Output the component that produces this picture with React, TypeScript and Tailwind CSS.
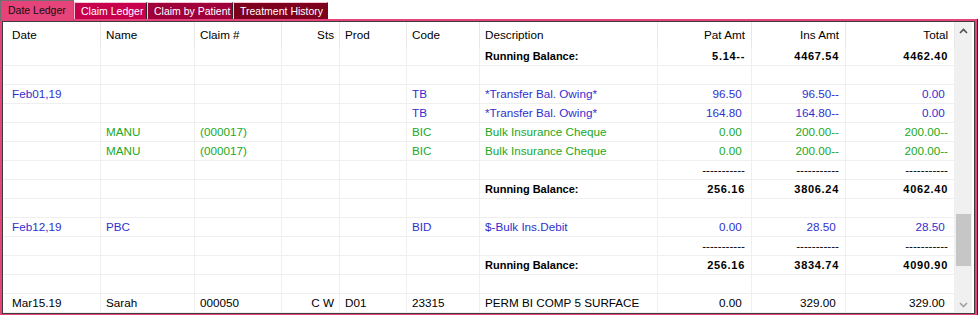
import React from 'react';

type Row = {
  cells: string[];
  tone?: 'blue' | 'green' | 'black';
  bold?: boolean;
};

const cols = 'grid grid-cols-[98px_94px_87px_58px_67px_73px_178px_94px_94px_109px]';
const rightCols = [3, 7, 8, 9];

const empty = ['', '', '', '', '', '', '', '', '', ''];
const dashes = ['', '', '', '', '', '', '', '-----------', '-----------', '-----------'];

const rows: Row[] = [
  { cells: ['', '', '', '', '', '', 'Running Balance:', '5.14--', '4467.54', '4462.40'], bold: true },
  { cells: empty },
  { cells: ['Feb01,19', '', '', '', '', 'TB', '*Transfer Bal. Owing*', '96.50 ', '96.50--', '0.00 '], tone: 'blue' },
  { cells: ['', '', '', '', '', 'TB', '*Transfer Bal. Owing*', '164.80 ', '164.80--', '0.00 '], tone: 'blue' },
  { cells: ['', 'MANU', '(000017)', '', '', 'BIC', 'Bulk Insurance Cheque', '0.00 ', '200.00--', '200.00--'], tone: 'green' },
  { cells: ['', 'MANU', '(000017)', '', '', 'BIC', 'Bulk Insurance Cheque', '0.00 ', '200.00--', '200.00--'], tone: 'green' },
  { cells: dashes },
  { cells: ['', '', '', '', '', '', 'Running Balance:', '256.16', '3806.24', '4062.40'], bold: true },
  { cells: empty },
  { cells: ['Feb12,19', 'PBC', '', '', '', 'BID', '$-Bulk Ins.Debit', '0.00 ', '28.50 ', '28.50 '], tone: 'blue' },
  { cells: dashes },
  { cells: ['', '', '', '', '', '', 'Running Balance:', '256.16', '3834.74', '4090.90'], bold: true },
  { cells: empty },
  { cells: ['Mar15.19', 'Sarah', '000050', 'C W', 'D01', '23315', 'PERM BI COMP 5 SURFACE', '0.00 ', '329.00 ', '329.00 '], tone: 'black' },
];

const headers = ['Date', 'Name', 'Claim #', 'Sts', 'Prod', 'Code', 'Description', 'Pat Amt', 'Ins Amt', 'Total'];

function toneClass(tone?: Row['tone']) {
  if (tone === 'blue') return 'text-[#2f2fd0]';
  if (tone === 'green') return 'text-[#22a822]';
  return 'text-black';
}

function cellPad(i: number) {
  if (i === 0) return 'pl-[9px]';
  if (rightCols.includes(i)) return 'justify-end pr-[5px]';
  return 'pl-[5px]';
}

const tabs = [
  { label: 'Claim Ledger', cls: 'w-[73px] bg-[#c6004c]' },
  { label: 'Claim by Patient', cls: 'w-[86px] bg-[#a0003a]' },
  { label: 'Treatment History', cls: 'w-[95px] bg-[#7d001c]' },
];

export default function App() {
  return (
    <div className="w-[978px] h-[315px] bg-white overflow-hidden font-['Liberation_Sans',Arial,sans-serif] flex flex-col">
      {/* tab strip */}
      <div className="flex items-end h-[19px] relative z-10">
        <div className="w-[74px] h-[21px] -mb-[2px] bg-[#e5437a] border border-b-0 border-[#707070] text-[#111] text-[10.5px] pl-[7px] flex items-center">
          Date Ledger
        </div>
        {tabs.map((t) => (
          <div
            key={t.label}
            className={`${t.cls} h-[17px] border-t border-l border-t-[#f4c6d4] border-l-[#f4c6d4] border-r border-r-[#2a2a2a] text-white text-[10.5px] pl-[6px] pt-[1px] flex items-center`}
          >
            {t.label}
          </div>
        ))}
      </div>

      {/* panel */}
      <div className="flex-1 border-r border-b border-[#2a2a2a]">
        <div className="h-full border-2 border-[#e5437a]">
          <div className="h-full border border-[#3c3c3c] flex text-[11.7px] bg-white">
            <div className="w-[952px] flex flex-col overflow-hidden">
              <div className={`${cols} h-[25px] shrink-0`}>
                {headers.map((h, i) => (
                  <div key={h} className={`flex items-center border-r border-[#e6e6e6] ${cellPad(i)} ${i >= 7 ? 'pr-[6px]' : ''}`}>
                    {h}
                  </div>
                ))}
              </div>
              {rows.map((r, ri) => (
                <div key={ri} className={`${cols} h-[19px] shrink-0 border-b border-[#efefef] ${toneClass(r.tone)}`}>
                  {r.cells.map((c, i) => (
                    <div
                      key={i}
                      className={`flex items-center whitespace-pre border-r border-[#efefef] ${cellPad(i)} ${i >= 7 ? 'pr-[6px]' : ''} ${r.bold ? 'font-bold text-[11px]' : ''} ${r.bold && i >= 7 ? 'tracking-[0.7px]' : ''}`}
                    >
                      {c}
                    </div>
                  ))}
                </div>
              ))}
            </div>

            {/* scrollbar */}
            <div className="w-[17px] bg-[#f0f0f0] flex flex-col">
              <div className="h-[17px] flex items-center justify-center">
                <svg width="9" height="6" viewBox="0 0 9 6">
                  <polyline points="1,5 4.5,1.5 8,5" fill="none" stroke="#505050" strokeWidth="1.6" />
                </svg>
              </div>
              <div className="mt-[175px] mx-[1px] h-[52px] bg-[#c6c6c6]" />
              <div className="flex-1" />
              <div className="h-[17px] flex items-center justify-center">
                <svg width="9" height="6" viewBox="0 0 9 6">
                  <polyline points="1,1 4.5,4.5 8,1" fill="none" stroke="#a0a0a0" strokeWidth="1.6" />
                </svg>
              </div>
            </div>
            <div className="flex-1 bg-white" />
          </div>
        </div>
      </div>
    </div>
  );
}
